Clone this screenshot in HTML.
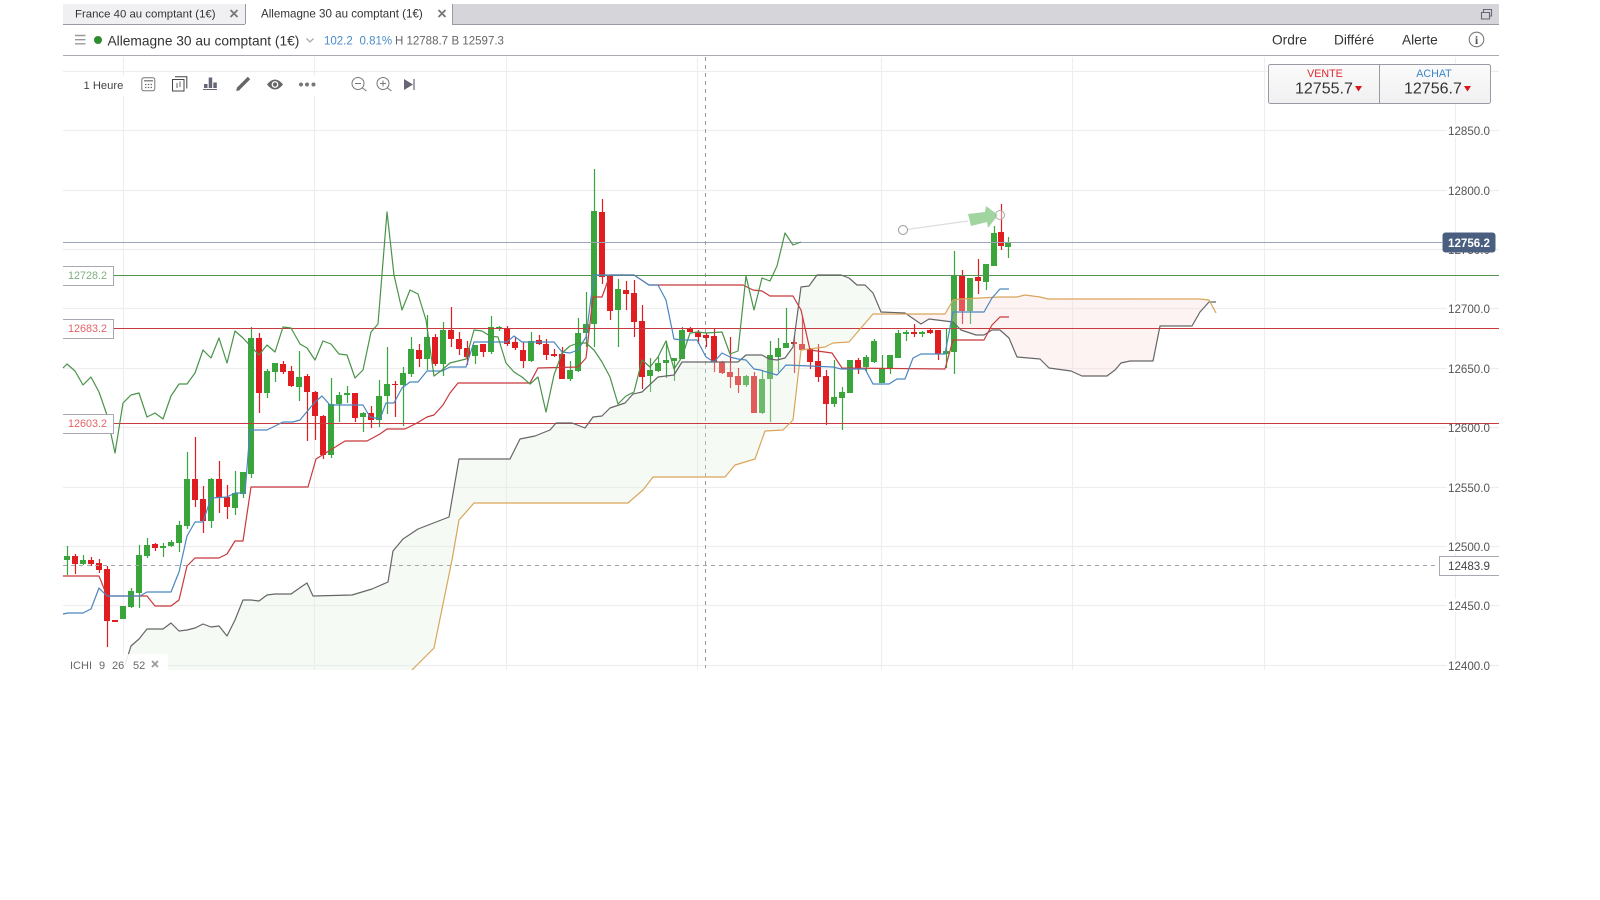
<!DOCTYPE html>
<html lang="fr"><head><meta charset="utf-8"><title>Allemagne 30 au comptant</title>
<style>
html,body{margin:0;padding:0;background:#fff;width:1600px;height:900px;overflow:hidden}
svg{display:block;font-family:"Liberation Sans",sans-serif}
.ax{font-size:11.6px;fill:#555}
.ln{fill:none;stroke-width:1.2;stroke-linejoin:round}
</style></head><body>
<svg width="1600" height="900" viewBox="0 0 1600 900" xmlns="http://www.w3.org/2000/svg">
<defs><linearGradient id="pb" x1="0" y1="0" x2="0" y2="1"><stop offset="0" stop-color="#fbfbfb"/><stop offset="1" stop-color="#f0f0f2"/></linearGradient></defs>
<!-- grid -->
<path d="M63 71.5H1499M63 130.5H1499M63 190.5H1499M63 249.5H1499M63 308.5H1499M63 368.5H1499M63 427.5H1499M63 487.5H1499M63 546.5H1499M63 605.5H1499M63 665.5H1499" stroke="#eeeef0" stroke-width="1.2" fill="none"/>
<path d="M123.5 57V670M314.5 57V670M506.5 57V670M697.5 57V670M881.5 57V670M1072.5 57V670M1264.5 57V670M1455.5 57V670" stroke="#eeeef0" stroke-width="1.2" fill="none"/>
<path d="M705.5 57V668" stroke="#9a9aa2" stroke-width="1" stroke-dasharray="4 4" fill="none"/>
<!-- candles -->
<path fill="none" stroke="#3aa53a" stroke-width="1.2" d="M67.5 546V575M83.5 555V565M131.5 588V608M139.5 545V608M147.5 538V558M163.5 543V557M171.5 540V547M179.5 521V552M187.5 452V529M211.5 478V528M235.5 471V515M243.5 472V498M251.5 327V478M267.5 369V398M275.5 363V382M299.5 351V401M331.5 378V458M339.5 392V422M347.5 386V403M363.5 412V432M379.5 380V427M387.5 347V414M403.5 367V426M411.5 337V377M427.5 315V370M443.5 322V376M475.5 345V364M491.5 316V354M499.5 326V331M531.5 332V362M570.5 361V381M578.5 318V372M586.5 292V347M594.5 169V347M618.5 279V347M650.5 358V392M658.5 357V372M666.5 341V378M674.5 358V381M682.5 327V359M746.5 375V387M762.5 370V414M770.5 341V422M778.5 338V372M786.5 308V348M834.5 360V407M842.5 387V430M866.5 355V371M874.5 339V363M882.5 355V383M890.5 355V374M898.5 330V358M906.5 330V341M922.5 331V337M946.5 329V368M954.5 251V374M970.5 278V324M986.5 264V290M994.5 226V266M1008.5 237V258"/>
<path fill="none" stroke="#3aa53a" stroke-width="6" d="M67 556V560M83 560V564M123 606V619M131 591V607M139 555V593M147 545V556M163 546V548M171 542V546M179 525V543M187 479V526M211 479V521M235 493V508M243 472V494M251 338V474M267 371V393M275 363V372M299 377V387M331 404V455M339 395V404M347 393V395M363 413V417M379 396V420M387 384V396M403 373V385M411 349V374M427 337V359M443 330V364M475 345V356M491 327V352M499 327V328M531 341V361M570 370V379M578 333V371M586 324V333M594 211V324M618 289V310M650 370V376M658 363V371M666 360V363M674 358V361M682 330V359M746 376V385M762 379V413M770 355V379M778 348V357M786 343V348M834 397V404M842 392V398M850 360V393M866 357V367M874 341V362M882 369V383M890 355V369M898 333V358M906 332V334M922 332V334M946 351V354M954 275V352M970 278V311M986 264V282M994 233V266M1008 242V247"/>
<path fill="none" stroke="#e01e22" stroke-width="1.2" d="M75.5 554V574M91.5 557V566M99.5 559V573M107.5 566V647M115.5 620V622M155.5 543V551M195.5 437V507M203.5 486V533M219.5 461V513M227.5 485V519M259.5 333V413M283.5 361V374M291.5 366V387M307.5 374V441M315.5 391V440M323.5 415V459M355.5 393V422M371.5 406V428M395.5 381V417M419.5 344V367M435.5 334V366M451.5 307V347M459.5 332V355M467.5 341V365M483.5 344V357M507.5 326V346M515.5 337V350M523.5 342V368M539.5 335V345M546.5 339V360M554.5 349V357M562.5 347V379M602.5 199V284M610.5 275V320M626.5 281V310M634.5 280V337M642.5 305V389M690.5 327V332M698.5 330V344M706.5 333V347M714.5 328V372M722.5 361V374M730.5 337V388M738.5 368V393M754.5 372V413M794.5 336V373M802.5 316V350M810.5 348V369M818.5 344V382M826.5 370V425M858.5 358V374M914.5 324V337M930.5 329V334M938.5 330V360M962.5 270V324M978.5 259V294M1001.5 204V250"/>
<path fill="none" stroke="#e01e22" stroke-width="6" d="M75 556V564M91 560V564M99 563V570M107 569V621M115 620V622M155 544V548M195 479V500M203 499V521M219 479V498M227 497V507M259 338V393M283 364V372M291 371V386M307 376V392M315 392V416M323 416V455M355 393V418M371 413V420M395 384V385M419 350V359M435 337V364M451 330V339M459 339V349M467 348V357M483 344V352M507 328V344M515 342V348M523 350V361M539 340V344M546 344V355M554 354V356M562 354V379M602 212V277M610 275V311M626 290V294M634 293V322M642 321V377M690 328V332M698 332V337M706 335V338M714 336V362M722 362V373M730 372V377M738 376V385M754 376V413M794 342V344M802 344V350M810 349V362M818 361V377M826 376V404M858 360V368M914 332V334M930 330V333M938 330V354M962 276V311M978 277V281M1001 232V246"/>
<!-- cloud -->
<path fill="rgb(222,238,222)" fill-opacity=".3" d="M125 665L131 646L139 639L147 629L163 629L171 623L179 631L187 630L195 628L203 624L211 627L219 626L227 636L235 620L243 600L251 600L259 601L267 595L275 594L291 594L301 587L307 583L313 596L352 595L372 589L388 582L393 551L403 539L418 529L449 517L459 459L510 459L520 439L535 436L550 430L556 423L572 423L585 428L593 417L602 416L610 408L625 403L633 394L642 392L658 377L674 375L682 362L738 362L746 355L762 355L769 359L777 360L785 358L793 347L801 287L809 286L817 275L841 275L849 278L857 285L865 285L873 293L878 313L873 314L849 342L833 343L825 347L801 350L793 420L783 430L765 431L755 459L735 465L725 477L653 477L643 490L636 496L628 503L474 503L459 520L452 560L434 648L412 670L125 670Z"/>
<path fill="rgb(248,215,215)" fill-opacity=".3" d="M878 313L881 312L905 313L921 324L929 319L953 322L961 330L976 335L984 335L992 330L1000 330L1009 338L1017 357L1040 359L1049 368L1071 371L1082 376L1107 376L1115 370L1121 363L1130 361L1153 361L1160 326L1192 326L1200 312L1209 302L1209 300L1048 299L1040 297L1025 295L1017 297L1000 297L960 299L953 300L945 314Z"/>
<!-- horizontal levels -->
<path d="M63 242.5H1442" stroke="#9aa5b8" fill="none"/>
<path d="M113 275.5H1499" stroke="#53934f" fill="none"/>
<path d="M113 328.5H1499M113 423.5H1499" stroke="#c83a3e" fill="none"/>
<path d="M63 565.5H1439" stroke="#a5a5ad" stroke-dasharray="4 4" fill="none"/>
<!-- senkou B, A -->
<polyline class="ln" stroke="#666" points="125,665 131,646 139,639 147,629 163,629 171,623 179,631 187,630 195,628 203,624 211,627 219,626 227,636 235,620 243,600 251,600 259,601 267,595 275,594 291,594 301,587 307,583 313,596 352,595 372,589 388,582 393,551 403,539 418,529 449,517 459,459 510,459 520,439 535,436 550,430 556,423 572,423 585,428 593,417 602,416 610,408 625,403 633,394 642,392 658,377 674,375 682,362 738,362 746,355 762,355 769,359 777,360 785,358 793,347 801,287 809,286 817,275 841,275 849,278 857,285 865,285 873,293 881,312 905,313 921,324 929,319 953,322 961,330 976,335 984,335 992,330 1000,330 1009,338 1017,357 1040,359 1049,368 1071,371 1082,376 1107,376 1115,370 1121,363 1130,361 1153,361 1160,326 1192,326 1200,312 1209,302 1216,302"/>
<polyline class="ln" stroke="#d9a55a" points="412,670 434,648 452,560 459,520 474,503 628,503 636,496 643,490 653,477 725,477 735,465 755,459 765,431 783,430 793,420 801,350 825,347 833,343 849,342 873,314 945,314 953,300 960,299 1000,297 1017,297 1025,295 1040,297 1048,299 1200,299 1209,300 1216,313"/>
<!-- kijun -->
<polyline class="ln" stroke="#c8383c" points="63,576 99,576 107,596 147,596 155,606 171,606 179,600 187,566 195,558 219,558 227,554 235,541 243,541 251,487 308,487 316,459 345,441 367,441 380,434 387,429 405,429 417,423 427,417 434,415 443,405 450,393 458,383 530,383 538,368 578,367 586,358 593,297 602,297 610,275 634,275 649,285 743,285 753,290 762,291 770,296 793,296 801,310 810,350 832,353 842,368 945,369 953,340 984,340 992,325 1000,317 1009,317"/>
<!-- tenkan -->
<polyline class="ln" stroke="#4a86c0" points="63,614 68,613 83,613 91,609 99,588 107,596 140,596 147,592 171,592 179,572 187,536 195,522 203,522 211,498 227,497 235,493 245,493 250,430 267,430 283,422 293,422 300,420 315,402 322,396 330,405 363,405 370,417 380,419 386,403 394,403 402,388 410,382 418,382 427,371 442,371 450,367 466,367 474,342 507,342 514,336 522,342 554,342 562,352 570,353 578,350 586,337 594,275 634,275 649,285 658,285 666,300 674,339 682,340 697,340 706,357 714,362 722,353 730,357 738,359 746,360 754,369 760,370 777,375 786,365 833,367 841,369 865,369 873,384 889,384 897,379 905,379 913,358 921,354 945,354 953,312 984,312 992,298 1000,289 1009,289"/>
<!-- chikou -->
<polyline class="ln" stroke="#4a934a" points="63,368 67,364 75,371 83,385 91,377 99,392 107,415 115,453 123,403 131,395 139,393 147,417 155,413 163,419 171,396 179,384 187,384 195,373 203,350 211,358 219,338 227,363 235,331 243,338 259,355 267,345 275,352 283,327 291,328 300,344 307,348 315,360 323,341 331,344 339,354 347,355 355,378 363,370 371,332 378,324 387,212 394,275 402,310 410,290 418,294 426,320 434,376 442,370 450,363 466,359 474,330 482,331 490,336 498,337 506,363 514,372 522,377 530,384 538,377 546,412 554,375 562,353 570,346 578,343 586,343 594,350 602,362 610,377 618,404 626,396 634,392 642,360 650,367 658,357 666,341 674,369 682,357 690,333 698,332 706,333 722,332 730,354 738,351 746,276 754,310 762,278 770,281 777,266 785,233 793,245 801,242"/>
<!-- drawing -->
<path d="M907 229.5L968 221" stroke="#ddd" stroke-width="1.2" fill="none"/>
<circle cx="903" cy="230" r="4.5" fill="#fff" stroke="#999"/>
<path d="M968 214L985 212L986 206L998 215L988 228L987 222L971 226Z" fill="#a0d5a0"/>
<circle cx="1000" cy="215" r="4.5" fill="#fff" fill-opacity=".4" stroke="#aaa"/>
<!-- axis labels -->
<g fill="#fff"><rect x="1447" y="124" width="43" height="13"/><rect x="1447" y="184" width="43" height="13"/><rect x="1447" y="302" width="43" height="13"/><rect x="1447" y="362" width="43" height="13"/><rect x="1447" y="424" width="43" height="13"/><rect x="1447" y="481" width="43" height="13"/><rect x="1447" y="540" width="43" height="13"/><rect x="1447" y="599" width="43" height="13"/><rect x="1447" y="659" width="43" height="13"/></g>
<g class="ax"><text x="1448" y="135">12850.0</text><text x="1448" y="195">12800.0</text><text x="1448" y="254">12750.0</text><text x="1448" y="313">12700.0</text><text x="1448" y="373">12650.0</text><text x="1448" y="432">12600.0</text><text x="1448" y="492">12550.0</text><text x="1448" y="551">12500.0</text><text x="1448" y="610">12450.0</text><text x="1448" y="670">12400.0</text></g>
<rect x="1442.5" y="232.5" width="53" height="20" rx="3" fill="#4a5f80"/>
<text x="1448" y="247" font-size="11.6" font-weight="bold" fill="#fff">12756.2</text>
<path d="M1499 556.5H1439.5V575.5H1499" fill="#fff" stroke="#a8a8b2"/>
<text x="1448" y="570" class="ax" style="fill:#444">12483.9</text>
<!-- left labels -->
<g fill="#fff" stroke="#a8a8b2"><path d="M63 266.5H113.5V285.5H63"/><path d="M63 319.5H113.5V338.5H63"/><path d="M63 414.5H113.5V433.5H63"/></g>
<text x="68" y="279" font-size="10.8" fill="#7fb07f">12728.2</text>
<text x="68" y="332" font-size="10.8" fill="#e06468">12683.2</text>
<text x="68" y="427" font-size="10.8" fill="#e06468">12603.2</text>
<!-- ICHI -->
<rect x="63" y="654" width="105" height="17" fill="#fff" fill-opacity=".88"/>
<text y="669" font-size="11" fill="#666"><tspan x="70">ICHI</tspan><tspan x="99">9</tspan><tspan x="112">26</tspan><tspan x="133">52</tspan></text>
<path d="M152 661L158 667M158 661L152 667" stroke="#999" stroke-width="1.7" fill="none"/>
<!-- toolbar -->
<rect x="80" y="76" width="345" height="20" fill="#fff"/>
<text x="83.5" y="89" font-size="11.2" fill="#444">1 Heure</text>
<rect x="141.8" y="77.8" width="13" height="13" rx="2" fill="none" stroke="#777" stroke-width="1"/>
<path d="M144 80.8H153M145 84.5h1.4m1.4 0h1.4m1.4 0h1.4M145 87.5h1.4m1.4 0h1.4m1.4 0h1.4" stroke="#666" stroke-width="1.2" fill="none"/>
<rect x="172.5" y="79.5" width="11.5" height="11.5" fill="#fff" stroke="#444"/>
<path d="M175 76.8H186.8V88.5" fill="none" stroke="#444"/>
<path d="M177 83V88M180 81.5V87" stroke="#666" fill="none"/>
<path d="M204 84h3.5v4H204zM208.7 77.5h3.5v10.5h-3.5zM213.3 82.5h3.5v5.5h-3.5z" fill="#667"/>
<path d="M203 89.5H217" stroke="#667" fill="none"/>
<path d="M238 89L249 78" stroke="#666" stroke-width="3.4" fill="none"/>
<path d="M236.2 91L237 87.5L239.8 90.2Z" fill="#666"/>
<path d="M267 84.5Q275 74.5 283 84.5Q275 94.5 267 84.5Z" fill="#666"/>
<circle cx="275" cy="84.5" r="3.4" fill="#fff"/><circle cx="275" cy="84.5" r="2.1" fill="#666"/>
<g fill="#777"><circle cx="301" cy="84.5" r="2"/><circle cx="307" cy="84.5" r="2"/><circle cx="313.5" cy="84.5" r="2"/></g>
<g fill="none" stroke="#777"><circle cx="358" cy="83.5" r="6"/><path d="M355 83.5H361M362.5 88L366.5 91" /><circle cx="383" cy="83.5" r="6"/><path d="M380 83.5H386M383 80.5V86.5M387.5 88L391.5 91"/></g>
<path d="M404 79L413 84.5L404 90Z" fill="#667"/><path d="M414 79V90" stroke="#667" stroke-width="1.2" fill="none"/>
<!-- tab bar -->
<rect x="63" y="4" width="1436" height="20" fill="#d6d6da"/>
<path d="M63 24.5H1499" stroke="#9a9aa5" fill="none"/>
<rect x="63" y="4" width="182" height="20" fill="#f0f0f2"/>
<rect x="245" y="4" width="207" height="21" fill="#fff"/>
<path d="M245.5 4V24M452.5 4V24" stroke="#9a9aa5" fill="none"/>
<text x="75" y="17.5" font-size="11.4" fill="#333">France 40 au comptant (1€)</text>
<text x="261" y="17.5" font-size="11.6" fill="#333">Allemagne 30 au comptant (1€)</text>
<path d="M230.5 10L237.5 17M237.5 10L230.5 17M438.5 10L445.5 17M445.5 10L438.5 17" stroke="#777" stroke-width="1.8" fill="none"/>
<path d="M1481.5 12.5h8v6.5h-8zM1483.5 12V9.5h8V16h-2" fill="none" stroke="#667" stroke-width="1.1"/>
<!-- header row -->
<path d="M75 35.5H85.5M75 39.7H85.5M75 43.8H85.5" stroke="#999" stroke-width="1.4" fill="none"/>
<circle cx="98" cy="40" r="4" fill="#2e8b2e"/>
<text x="107.5" y="45.5" font-size="13.75" fill="#333">Allemagne 30 au comptant (1€)</text>
<path d="M306.5 38.5L310 42L313.5 38.5" stroke="#aaa" stroke-width="1.3" fill="none"/>
<text x="324" y="44.5" font-size="11.5" fill="#4a8cc8">102.2</text>
<text x="359.5" y="44.5" font-size="11.5" fill="#4a8cc8">0.81%</text>
<text x="395" y="44.5" font-size="11.5" fill="#666">H 12788.7</text>
<text x="451.5" y="44.5" font-size="11.5" fill="#666">B 12597.3</text>
<text x="1272" y="44.5" font-size="13.7" fill="#333">Ordre</text>
<text x="1334" y="44.5" font-size="13.7" fill="#333">Différé</text>
<text x="1402" y="44.5" font-size="13.7" fill="#333">Alerte</text>
<circle cx="1476.5" cy="39.5" r="7.3" fill="none" stroke="#777" stroke-width="1.1"/>
<text x="1476.5" y="44" font-size="12" font-weight="bold" font-family="Liberation Serif,serif" text-anchor="middle" fill="#555">i</text>
<path d="M63 55.5H1499" stroke="#aaaab2" fill="none"/>
<!-- price box -->
<rect x="1268.5" y="64.5" width="222" height="39" rx="2" fill="url(#pb)" stroke="#9a9aa5"/>
<path d="M1379.5 65V103" stroke="#9a9aa5" fill="none"/>
<text x="1325" y="77" font-size="10.7" fill="#e0282e" text-anchor="middle">VENTE</text>
<text x="1434" y="77" font-size="10.7" fill="#3a86c8" text-anchor="middle">ACHAT</text>
<text x="1295" y="93.5" font-size="16" fill="#333">12755.7</text>
<text x="1404" y="93.5" font-size="16" fill="#333">12756.7</text>
<path d="M1355 86H1362L1358.5 91.5ZM1464 86H1471L1467.5 91.5Z" fill="#d9161c"/>
</svg>
</body></html>
